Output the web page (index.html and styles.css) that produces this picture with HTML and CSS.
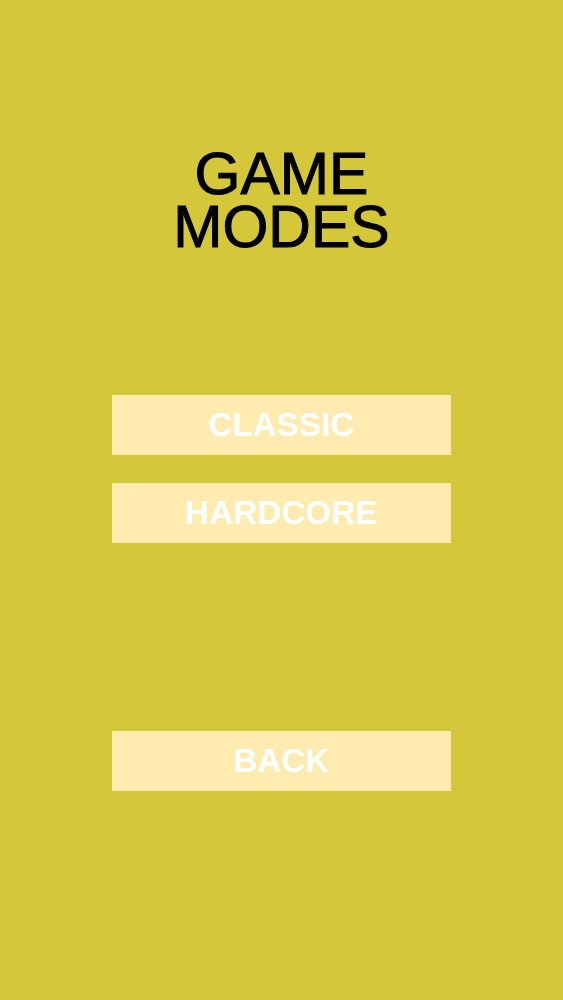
FILE: index.html
```html
<!DOCTYPE html>
<html>
<head>
<meta charset="utf-8">
<link rel="stylesheet" href="styles.css">
</head>
<body>
<main class="screen">
  <h1 class="title">GAME<br>MODES</h1>
  <div class="modes">
    <button class="btn">CLASSIC</button>
    <button class="btn">HARDCORE</button>
  </div>
  <button class="btn back">BACK</button>
</main>
</body>
</html>
```
FILE: styles.css
```css
html, body {
  margin: 0;
  padding: 0;
  background: #d4c83a;
}
.screen {
  width: 563px;
  height: 1000px;
  display: flex;
  flex-direction: column;
  align-items: center;
  padding-top: 148px;
  box-sizing: border-box;
  font-family: "Liberation Sans", Arial, sans-serif;
}
.title {
  margin: 0;
  font-size: 59px;
  line-height: 53px;
  font-weight: normal;
  color: #000;
  -webkit-text-stroke: 1px #000;
  text-align: center;
}
.modes {
  margin-top: 141px;
  display: flex;
  flex-direction: column;
  gap: 28px;
}
.btn {
  display: block;
  width: 339px;
  height: 60px;
  margin: 0;
  padding: 0;
  border: none;
  background: #feebaf;
  color: #fff;
  font-family: "Liberation Sans", Arial, sans-serif;
  font-weight: bold;
  font-size: 33px;
  letter-spacing: 0.2px;
  text-align: center;
  line-height: 60px;
}
.back {
  margin-top: 188px;
}
```
